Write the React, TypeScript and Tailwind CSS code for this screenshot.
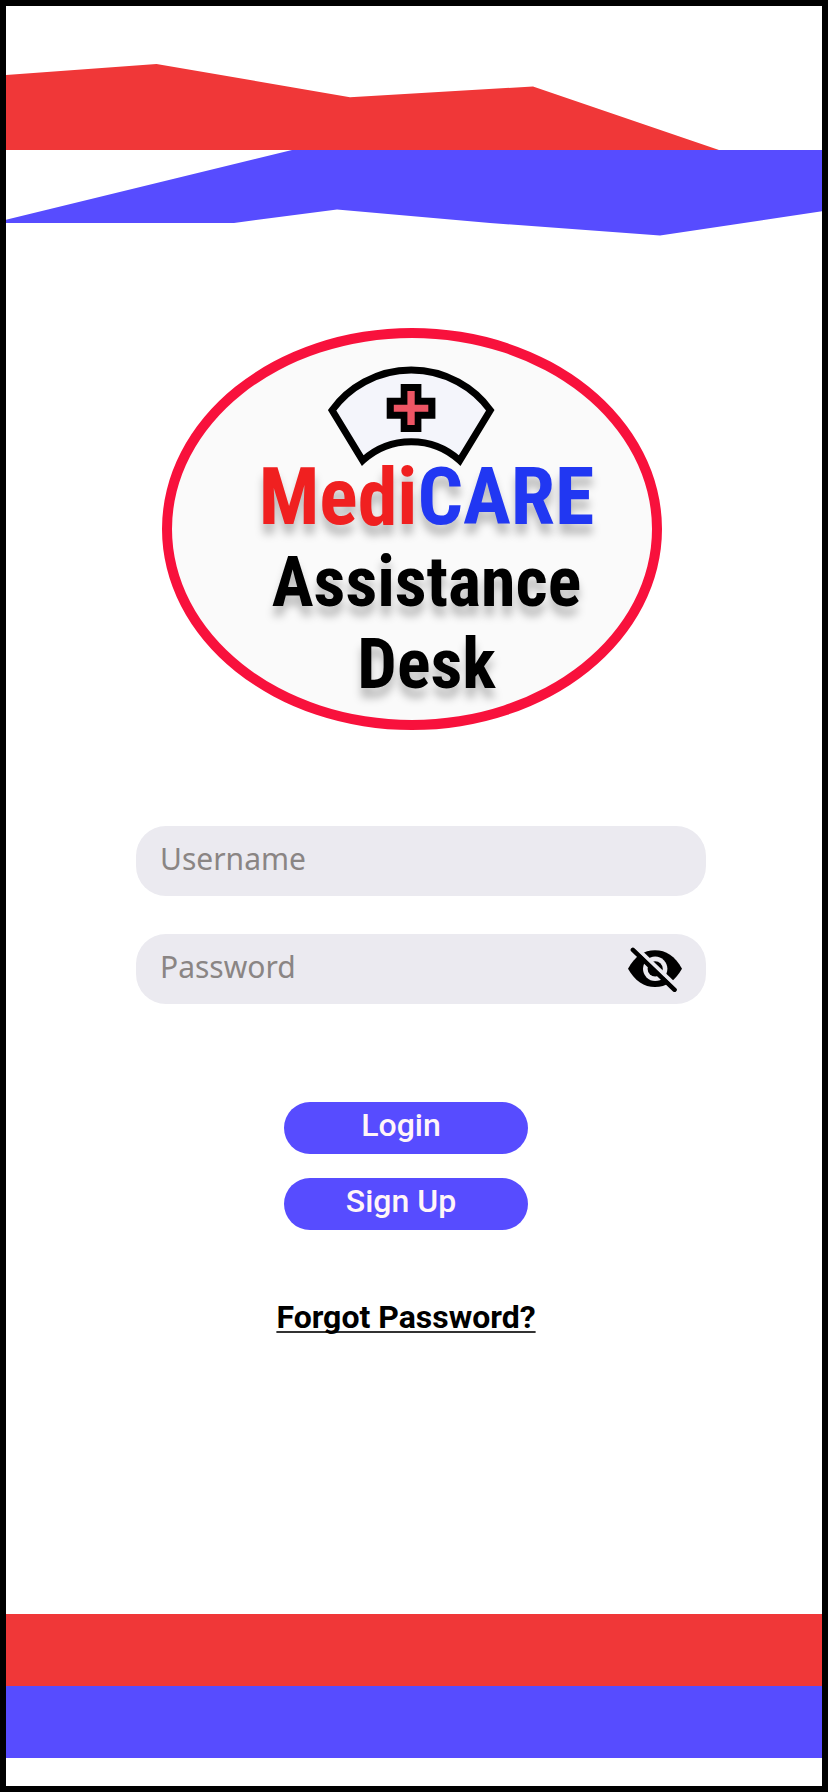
function HeaderWaves() {
  return (
    <svg className="block h-[234px] w-full" viewBox="6 6 816 234" preserveAspectRatio="none">
      <polygon fill="#f03738" points="6,75 156.5,64 350,97.2 533,86.4 719,150 6,150" />
      <polygon fill="#574cff" points="6,219.7 292,150 822,150 822,211.2 660,235.6 490,223 337,209.4 234,223 6,223" />
    </svg>
  );
}

function NurseCap() {
  return (
    <svg className="h-[102px] w-[168px]" viewBox="328 366 168 102">
      <path
        d="M332.1 410.2 A98 98 0 0 1 490.3 410.2 L459.7 460.5 A72 72 0 0 0 362.7 460.5 Z"
        fill="#f4f5fb"
        stroke="#000"
        strokeWidth="7"
        strokeLinejoin="miter"
      />
      <path d="M400.7 384h20.7v13.7h14v21h-14V432h-20.7v-13.3h-14v-21h14z" fill="#000" />
      <path d="M407.4 391h7.3v13.7h13.6v7h-13.6V425h-7.3v-13.3h-13.6v-7h13.6z" fill="#ed5564" />
    </svg>
  );
}

function EyeOff() {
  return (
    <svg className="h-[46px] w-[54px]" viewBox="0 -1 54 46">
      <path d="M0 21.7C7 9 16 3.300 27 3.300S47 9 54 21.700C47 34 38 40 27 40S7 34 0 21.700Z" fill="#000" />
      <circle cx="27.200" cy="21.800" r="12.200" fill="#ebeaf0" />
      <circle cx="27.200" cy="21.800" r="7.600" fill="#000" />
      <path d="M7.500 0.100L49.200 40" stroke="#ebeaf0" strokeWidth="4" />
      <path d="M4.900 2.900L46.600 42.800" stroke="#000" strokeWidth="4.500" strokeLinecap="round" />
    </svg>
  );
}

export default function App() {
  return (
    <main className="flex h-[1792px] w-[828px] flex-col overflow-hidden border-[6px] border-black bg-white font-['Roboto',sans-serif]">
      <HeaderWaves />

      <section className="mt-[88px] ml-[156px] flex h-[402px] w-[500px] flex-col items-center rounded-[50%] border-[10px] border-[#f8113c] bg-[#fafafa] pt-[28px]">
        <NurseCap />
        <h1 className="-mt-[15px] ml-[29px] text-center font-['Roboto_Condensed','Roboto',sans-serif] font-bold whitespace-nowrap [font-stretch:75%] [text-shadow:0_10px_8px_rgba(0,0,0,0.25)]">
          <span className="block text-[80px] leading-[88px]">
            <span className="text-[#f02020]">Medi</span>
            <span className="text-[#2137f2]">CARE</span>
          </span>
          <span className="block text-[70px] leading-[82px] text-black">
            Assistance
            <br />
            Desk
          </span>
        </h1>
      </section>

      <form className="mt-24 flex flex-col font-['Noto_Sans',sans-serif] text-[30px] text-[#8a8584]">
        <label className="ml-[130px] flex h-[70px] w-[570px] items-center rounded-[30px] bg-[#ebeaf0] px-6 pb-1.5">
          Username
        </label>
        <label className="mt-[38px] ml-[130px] flex h-[70px] w-[570px] items-center justify-between rounded-[30px] bg-[#ebeaf0] px-6">
          <span className="pb-1.5">Password</span>
          <EyeOff />
        </label>
      </form>

      <nav className="mt-[98px] ml-[278px] flex w-[244px] flex-col gap-6 text-[32px] font-medium text-[#fff5f8]">
        <button className="flex h-[52px] items-center justify-center rounded-full bg-[#574cff] pr-[10px] pb-1.5">
          Login
        </button>
        <button className="flex h-[52px] items-center justify-center rounded-full bg-[#574cff] pr-[10px] pb-1.5">
          Sign Up
        </button>
      </nav>

      <a className="mt-[68px] w-[800px] text-center text-[32px] leading-[38px] font-bold text-black underline decoration-[#333] decoration-2 underline-offset-[3px] [text-decoration-skip-ink:none]">
        Forgot Password?
      </a>

      <footer className="mt-auto mb-7">
        <div className="h-[72px] bg-[#f03738]" />
        <div className="h-[72px] bg-[#574cff]" />
      </footer>
    </main>
  );
}
